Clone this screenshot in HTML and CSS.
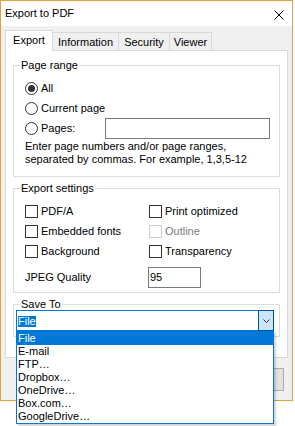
FILE: index.html
```html
<!DOCTYPE html>
<html>
<head>
<meta charset="utf-8">
<title>Export to PDF</title>
<link rel="stylesheet" href="styles.css">
</head>
<body>
<div class="window">
  <div class="titlebar">
    <span class="title">Export to PDF</span>
    <svg class="close" width="10" height="10" viewBox="0 0 10 10"><path d="M0.5 0.5L9.5 9.5M9.5 0.5L0.5 9.5" stroke="#000" stroke-width="1" fill="none"/></svg>
  </div>
  <div class="body">
    <div class="tabs">
      <div class="tab tab-export active">Export</div>
      <div class="tab tab-info">Information</div>
      <div class="tab tab-security">Security</div>
      <div class="tab tab-viewer">Viewer</div>
    </div>
    <div class="panel">
      <fieldset class="group">
        <legend>Page range</legend>
        <div class="gbody gbody-range">
          <div class="row"><span class="radio checked"></span><span class="lbl">All</span></div>
          <div class="row"><span class="radio"></span><span class="lbl">Current page</span></div>
          <div class="row"><span class="radio"></span><span class="lbl pages-label">Pages:</span><span class="input pages-input"></span></div>
          <p class="help">Enter page numbers and/or page ranges,<br>separated by commas. For example, 1,3,5-12</p>
        </div>
      </fieldset>
      <fieldset class="group">
        <legend>Export settings</legend>
        <div class="gbody gbody-settings">
          <div class="checks">
            <div class="row"><span class="cb"></span><span class="lbl">PDF/A</span></div>
            <div class="row"><span class="cb"></span><span class="lbl">Print optimized</span></div>
            <div class="row"><span class="cb"></span><span class="lbl">Embedded fonts</span></div>
            <div class="row"><span class="cb disabled"></span><span class="lbl disabled-text">Outline</span></div>
            <div class="row"><span class="cb"></span><span class="lbl">Background</span></div>
            <div class="row"><span class="cb"></span><span class="lbl">Transparency</span></div>
          </div>
          <div class="jpeg-row"><span class="jpeg-label">JPEG Quality</span><span class="input jpeg-input">95</span></div>
        </div>
      </fieldset>
      <fieldset class="group">
        <legend>Save To</legend>
        <div class="gbody gbody-save">
          <div class="combo">
            <div class="combo-val"><span class="sel">File</span></div>
            <div class="combo-btn"><svg width="7" height="4" viewBox="0 0 7 4"><path d="M0.5 0.5L3.5 3.5L6.5 0.5" stroke="#333" stroke-width="1" fill="none"/></svg></div>
          </div>
        </div>
      </fieldset>
    </div>
    <div class="buttons">
      <button class="btn" aria-label="OK"></button>
      <button class="btn" aria-label="Cancel"></button>
    </div>
  </div>
  <ul class="list">
    <li class="item selected">File</li>
    <li class="item">E-mail</li>
    <li class="item">FTP…</li>
    <li class="item">Dropbox…</li>
    <li class="item">OneDrive…</li>
    <li class="item">Box.com…</li>
    <li class="item">GoogleDrive…</li>
  </ul>
</div>
</body>
</html>
```

FILE: styles.css
```css
* { box-sizing: border-box; }

html, body { min-height: 426px; }

body {
  margin: 0;
  background: #fff;
  font-family: "Liberation Sans", Arial, sans-serif;
  font-size: 11px;
  line-height: 13px;
  color: #000;
}

.window {
  position: relative;
  width: 293px;
  height: 401px;
  border: 1px solid #e3a045;
  background: #f0f0f0;
  display: flex;
  flex-direction: column;
}

.titlebar {
  flex: none;
  height: 25px;
  background: #fff;
  display: flex;
  align-items: center;
  padding: 0 8px 0 4px;
}

.title { font-size: 11px; }

.close { margin-left: auto; margin-top: 3px; display: block; }

.body {
  flex: 1;
  display: flex;
  flex-direction: column;
  padding: 4px 4px 0 4px;
}

.tabs {
  display: flex;
  align-items: flex-end;
  height: 21px;
  margin-bottom: -1px;
}

.tab {
  height: 19px;
  border: 1px solid #d9d9d9;
  border-bottom: none;
  background: #f0f0f0;
  display: flex;
  align-items: center;
  justify-content: center;
  padding-top: 1px;
  margin-left: -1px;
}

.tab.active {
  height: 21px;
  background: #fff;
  position: relative;
  z-index: 1;
  margin-left: 0;
  padding-top: 0;
  padding-bottom: 1px;
}

.tab-export { width: 48px; }
.tab-info { width: 67px; }
.tab-security { width: 52px; }
.tab-viewer { width: 43px; }

.panel {
  flex: none;
  height: 308px;
  background: #fff;
  border: 1px solid #d9d9d9;
  padding: 8px 7px 20px 7px;
  display: flex;
  flex-direction: column;
}

.group {
  margin: 0;
  padding: 0;
  min-width: 0;
  border: 1px solid #dcdcdc;
}

.group + .group { margin-top: 5px; }

.group legend {
  padding: 0 1px;
  margin-left: 6px;
  line-height: 13px;
}

.gbody-range { padding: 6px 9px 10px 11px; }
.gbody-settings { padding: 6px 9px 4px 11px; }
.gbody-save { padding: 0 5px 5px 2px; }

.row {
  height: 20px;
  display: flex;
  align-items: center;
}

.lbl { margin-left: 3px; }

.radio {
  flex: none;
  width: 13px;
  height: 13px;
  border: 1px solid #333;
  border-radius: 50%;
  background: #fff;
  display: flex;
  align-items: center;
  justify-content: center;
}

.radio.checked::after {
  content: "";
  width: 7px;
  height: 7px;
  border-radius: 50%;
  background: #333;
}

.cb {
  flex: none;
  width: 13px;
  height: 13px;
  border: 1px solid #333;
  background: #fff;
}

.cb.disabled { border-color: #cccccc; }
.disabled-text { color: #7a7a7a; }

.pages-label { width: 64px; flex: none; }

.input {
  display: flex;
  align-items: center;
  background: #fff;
  border: 1px solid #7a7a7a;
  padding-left: 1px;
}

.pages-input { width: 165px; height: 21px; }

.help {
  margin: 2px 0 0 0;
  line-height: 13px;
}

.checks {
  display: grid;
  grid-template-columns: 124px 1fr;
  grid-auto-rows: 20px;
}

.jpeg-row {
  margin-top: 6px;
  height: 21px;
  display: flex;
  align-items: center;
}

.jpeg-label { width: 123px; flex: none; }
.jpeg-input { width: 53px; height: 21px; }

.combo {
  margin-top: -1px;
  height: 21px;
  border: 1px solid #0078d7;
  background: #fff;
  display: flex;
}

.combo-val {
  flex: 1;
  display: flex;
  align-items: center;
  padding-left: 1px;
}

.sel {
  background: #0078d7;
  color: #fff;
  height: 11px;
  line-height: 11px;
  margin-top: 1px;
}

.combo-btn {
  flex: none;
  width: 16px;
  margin: -1px -1px -1px 0;
  border: 1px solid #005499;
  background: #cce4f7;
  display: flex;
  align-items: center;
  justify-content: center;
}

/* dropped-down list of the Save To combo box, overlays the dialog */
.list {
  position: absolute;
  top: 330px;
  left: 15px;
  width: 258px;
  margin: 0;
  padding: 0;
  list-style: none;
  background: #fff;
  border: 1px solid #0078d7;
  box-shadow: 2px 2px 2px rgba(0, 0, 0, 0.18);
  z-index: 10;
}

.item {
  height: 13px;
  line-height: 13px;
  padding-left: 1px;
}

.item.selected {
  background: #0078d7;
  color: #fff;
}

.buttons {
  display: flex;
  justify-content: flex-end;
  gap: 6px;
  margin-top: 10px;
  padding-right: 4px;
}

.btn {
  width: 75px;
  height: 23px;
  background: #e1e1e1;
  border: 1px solid #adadad;
  padding: 0;
}
```
